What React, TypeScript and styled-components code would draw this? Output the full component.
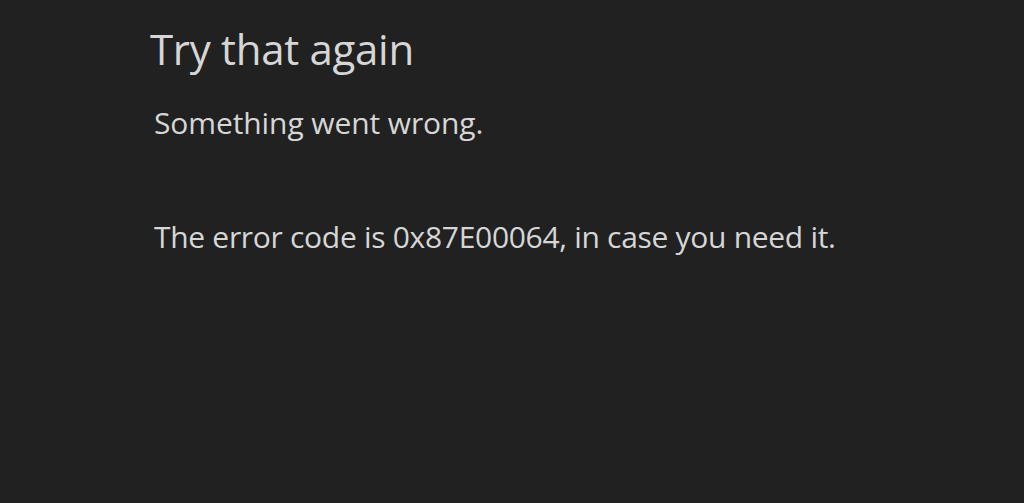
import React from 'react';
import styled, { createGlobalStyle } from 'styled-components';

const GlobalStyle = createGlobalStyle`
  html, body {
    margin: 0;
    padding: 0;
    background: #212121;
  }
`;

const Screen = styled.div`
  width: 1024px;
  height: 503px;
  background: #212121;
  box-sizing: border-box;
  padding: 24px 0 0 150px;
  font-family: "Open Sans", "Noto Sans", sans-serif;
  color: #d6d6d6;
  display: flex;
  flex-direction: column;
  overflow: hidden;
`;

const Title = styled.h1`
  margin: 0;
  font-size: 42px;
  font-weight: 400;
  line-height: 50px;
  letter-spacing: -0.3px;
`;

const Message = styled.p<{ $gap: number; $spacing: number }>`
  margin: ${(p) => p.$gap}px 0 0 4px;
  font-size: 30px;
  font-weight: 400;
  line-height: 36px;
  letter-spacing: ${(p) => p.$spacing}px;
`;

export default function App() {
  return (
    <>
      <GlobalStyle />
      <Screen>
        <Title>Try that again</Title>
        <Message $gap={31} $spacing={-0.1}>Something went wrong.</Message>
        <Message $gap={78} $spacing={-0.3}>
          The error code is 0x87E00064, in case you need it.
        </Message>
      </Screen>
    </>
  );
}
